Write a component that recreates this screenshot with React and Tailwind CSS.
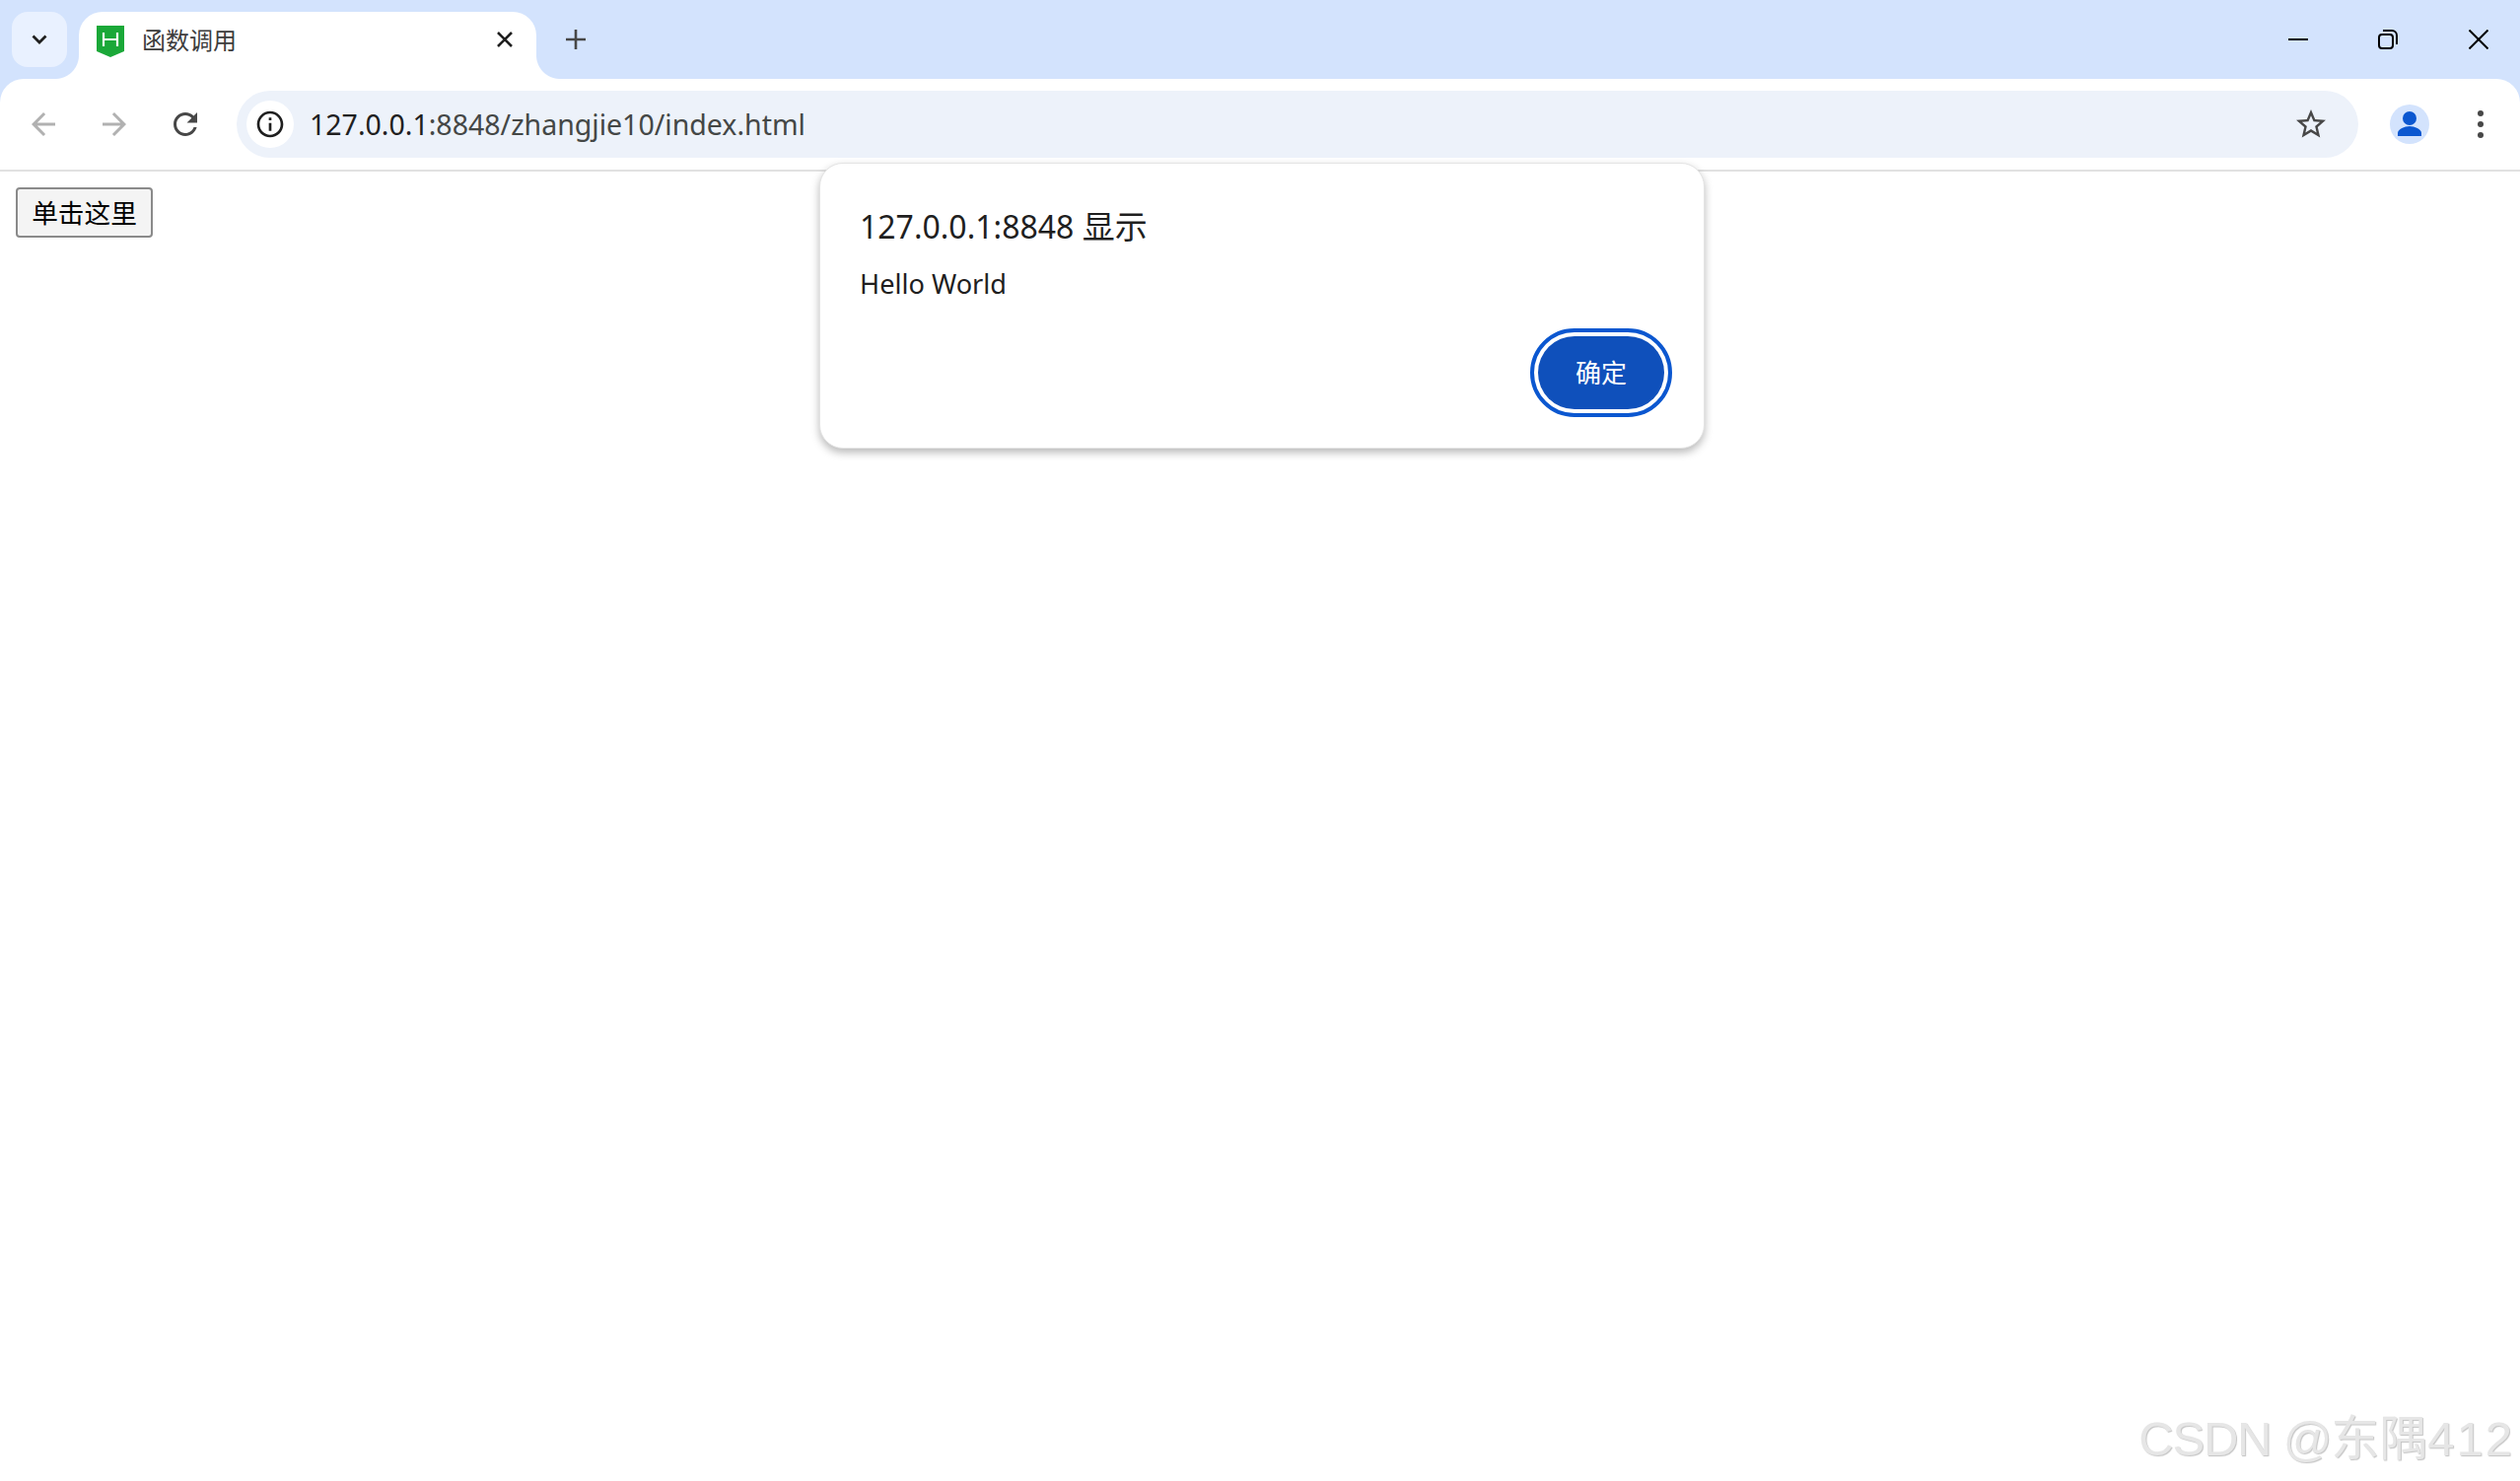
import React from "react";

const Mi = ({ d, className }) => (
  <svg viewBox="0 0 24 24" className={className} fill="currentColor"><path d={d} /></svg>
);

const ui = "font-['Noto_Sans','Noto_Sans_CJK_SC',sans-serif]";
const cjk = "font-['Noto_Sans_CJK_SC',sans-serif]";

function TabStrip() {
  return (
    <div className="h-20 flex items-end pl-3 bg-[#d3e3fd] shrink-0">
      <div className="relative z-10 w-14 h-14 mb-3 rounded-2xl bg-[#e9f1ff] flex items-center justify-center text-[#1f1f1f]">
        <svg viewBox="0 0 16 10" className="w-4 h-2.5" fill="none" stroke="currentColor" strokeWidth="2.8"><path d="M1.5 1.5 8 8l6.5-6.5" /></svg>
      </div>
      <div className="relative ml-3 w-[464px] h-[68px] bg-white rounded-t-3xl flex items-center pl-[18px]">
        <span className="absolute left-[-24px] bottom-0 w-6 h-6 bg-[radial-gradient(circle_at_0_0,#d3e3fd_23.5px,#ffffff_24.5px)]" />
        <span className="absolute right-[-24px] bottom-0 w-6 h-6 bg-[radial-gradient(circle_at_100%_0,#d3e3fd_23.5px,#ffffff_24.5px)]" />
        <svg viewBox="0 0 28 32" className="w-7 h-8 mb-[8px] shrink-0">
          <path d="M0 0h28v26l-14 6-14-6z" fill="#1aa838" />
          <path d="M7 7v14M21 7v14M7 14h14" stroke="#fff" strokeWidth="2.2" fill="none" />
        </svg>
        <span className={`${cjk} ml-[18px] text-[24px] leading-8 text-[#3c3c3c] mb-[12px]`}>函数调用</span>
        <svg viewBox="0 0 16 16" className="absolute left-[424px] top-[20px] w-4 h-4 text-[#1f1f1f]" fill="none" stroke="currentColor" strokeWidth="2.6"><path d="M1 1l14 14M15 1 1 15" /></svg>
      </div>
      <svg viewBox="0 0 20 20" className="ml-[30px] mb-[30px] w-5 h-5 text-[#474747]" fill="none" stroke="currentColor" strokeWidth="2.6"><path d="M10 0v20M0 10h20" /></svg>
      <div className="ml-auto flex items-center mb-[30px] text-black">
        <svg viewBox="0 0 20 20" className="w-5 h-5" fill="none" stroke="currentColor" strokeWidth="2"><path d="M0 10h20" /></svg>
        <svg viewBox="0 0 20 20" className="ml-[71px] w-5 h-5" fill="none" stroke="currentColor" strokeWidth="2"><rect x="1" y="5" width="14" height="14" rx="3" /><path d="M5 1h9a5 5 0 0 1 5 5v9" /></svg>
        <svg viewBox="0 0 20 20" className="ml-[72px] mr-8 w-5 h-5" fill="none" stroke="currentColor" strokeWidth="2"><path d="M0.5 0.5l19 19M19.5 0.5l-19 19" /></svg>
      </div>
    </div>
  );
}

function Toolbar() {
  return (
    <div className="bg-[#d3e3fd] shrink-0">
      <div className="h-[92px] bg-white rounded-t-3xl flex items-start pt-3 relative">
        <Mi className="ml-[26px] mt-4 w-9 h-9 text-[#b1b1b1]" d="M20 11H7.83l5.59-5.59L12 4l-8 8 8 8 1.41-1.41L7.83 13H20v-2z" />
        <Mi className="ml-9 mt-4 w-9 h-9 text-[#b1b1b1] -scale-x-100" d="M20 11H7.83l5.59-5.59L12 4l-8 8 8 8 1.41-1.41L7.83 13H20v-2z" />
        <Mi className="ml-9 mt-4 w-9 h-9 text-[#474747]" d="M17.65 6.35C16.2 4.9 14.21 4 12 4c-4.42 0-7.99 3.58-7.99 8s3.57 8 7.99 8c3.73 0 6.84-2.55 7.73-6h-2.08c-.82 2.33-3.04 4-5.65 4-3.31 0-6-2.69-6-6s2.69-6 6-6c1.66 0 3.14.69 4.22 1.78L13 11h7V4l-2.35 2.35z" />
        <div className="ml-[34px] w-[2152px] h-[68px] rounded-full bg-[#edf2fa] flex items-center pl-[10px] pr-[30px]">
          <div className="w-12 h-12 rounded-full bg-white flex items-center justify-center text-[#1f1f1f]">
            <Mi className="w-8 h-8" d="M11 7h2v2h-2zm0 4h2v6h-2zm1-9C6.48 2 2 6.48 2 12s4.48 10 10 10 10-4.48 10-10S17.52 2 12 2zm0 18c-4.41 0-8-3.59-8-8s3.59-8 8-8 8 3.59 8 8-3.59 8-8 8z" />
          </div>
          <div className={`${ui} ml-[16px] text-[28.5px] leading-10 text-[#444746]`}>
            <span className="text-[#1f1f1f]">127.0.0.1</span>:8848/zhangjie10/index.html
          </div>
          <Mi className="ml-auto w-9 h-9 text-[#474747]" d="M22 9.24l-7.19-.62L12 2 9.19 8.63 2 9.24l5.46 4.73L5.82 21 12 17.27 18.18 21l-1.63-7.03L22 9.24zM12 15.4l-3.76 2.27 1-4.28-3.32-2.88 4.38-.38L12 6.1l1.71 4.04 4.38.38-3.32 2.88 1 4.28L12 15.4z" />
        </div>
        <div className="ml-8 mt-[14px] w-10 h-10 rounded-full bg-[#d3e3fd] flex items-center justify-center overflow-hidden">
          <svg viewBox="0 0 40 40" className="w-10 h-10" fill="#0b57d0">
            <circle cx="20" cy="14" r="7" />
            <path d="M8 32v-3c0-4 7-7 12-7s12 3 12 7v3z" />
          </svg>
        </div>
        <div className="ml-[49px] mt-[20px] flex flex-col gap-[5px]">
          <span className="w-[6px] h-[6px] rounded-full bg-[#474747]" />
          <span className="w-[6px] h-[6px] rounded-full bg-[#474747]" />
          <span className="w-[6px] h-[6px] rounded-full bg-[#474747]" />
        </div>
      </div>
      <div className="h-[2px] bg-[#e1e1e1]" />
    </div>
  );
}

export default function App() {
  return (
    <div className="relative w-full h-screen bg-white overflow-hidden flex flex-col">
      <TabStrip />
      <Toolbar />
      <main className="flex-1 p-4">
        <button className={`${cjk} block w-[139px] h-[51px] border-2 border-[#8a8a8a] rounded-[4px] bg-[#f4f4f4] text-[26.67px] leading-none text-black`}>
          单击这里
        </button>
      </main>

      <div className={`${ui} absolute left-[831px] top-[165px] w-[898px] h-[290px] bg-white rounded-3xl border border-[#e4e4e4] shadow-[0_4px_8px_rgba(0,0,0,0.28)] flex flex-col pl-[40px] pr-[40px] pt-[42px]`}>
        <div className="text-[32px] leading-10 text-[#1f1f1f]">
          127.0.0.1:8848 <span className={`${cjk} text-[33px]`}>显示</span>
        </div>
        <div className="mt-[17px] text-[28px] leading-10 text-[#1f1f1f] scale-x-[0.97] origin-left">Hello World</div>
        <div className="mt-[34px] flex justify-end">
          <button className={`${cjk} w-[128px] h-[74px] pb-[2px] rounded-full bg-[#0f50bb] text-white text-[26px] leading-none ring-[4px] ring-white outline-4 outline-[#0b57d0] outline-offset-[4px]`}>
            确定
          </button>
        </div>
      </div>

      <div className="absolute right-[6px] bottom-[13px] font-['Liberation_Sans','Noto_Sans_CJK_SC',sans-serif] text-[49px] leading-[60px] text-[#e6e6e6] [text-shadow:1px_1px_1px_#c4c4c4]">
        <span className="tracking-[-1.2px]">CSDN @</span>东隅<span className="tracking-[2px]">412</span>
      </div>
    </div>
  );
}
